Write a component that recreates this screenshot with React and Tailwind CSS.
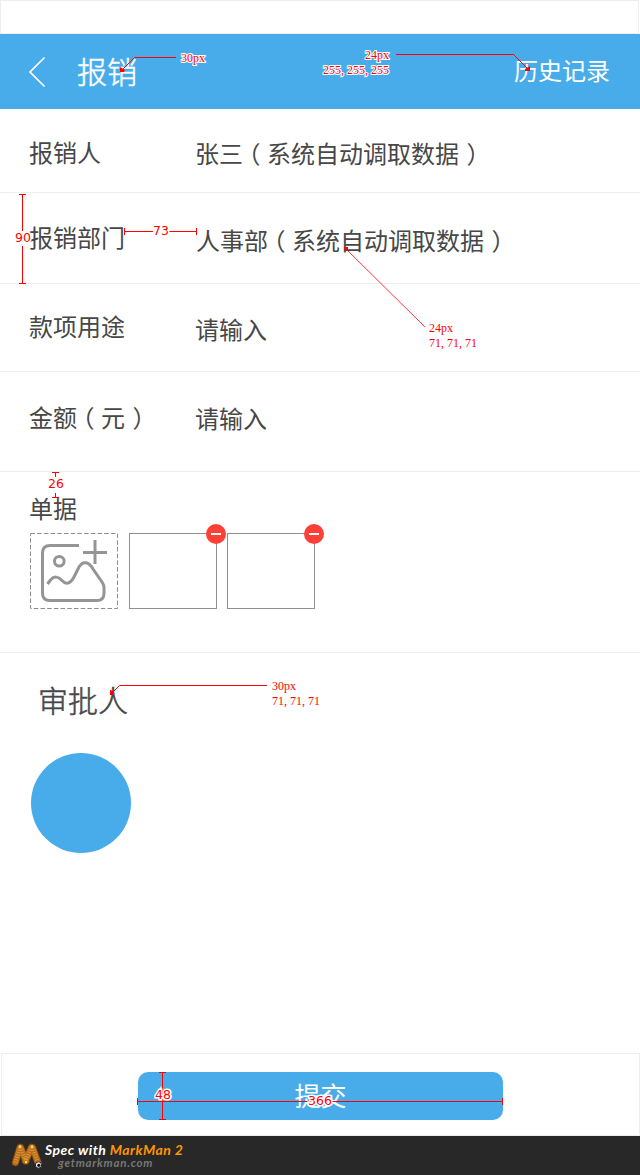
const CJK = 'font-["Noto_Sans_CJK_SC",sans-serif] font-normal';

function Text({ className, children }) {
  return <span className={`${className} whitespace-nowrap leading-none`}>{children}</span>;
}

function Paren({ children }) {
  return (
    <>
      <span className="mr-[6.5px] ml-[5.5px] [font-feature-settings:'halt']">（</span>
      {children}
      <span className="mr-[4.5px] ml-[7.5px] [font-feature-settings:'halt']">）</span>
    </>
  );
}

function Row({ label, value, className, valueClass }) {
  return (
    <div className={`${className} flex items-start border-b border-[#eeeeee] pl-[29px] text-2xl`}>
      <Text className="w-[166px]">{label}</Text>
      <Text className={valueClass}>{value}</Text>
    </div>
  );
}

function AddPhoto() {
  return (
    <svg className="h-[76px] w-[88px]" viewBox="0 0 88 76" fill="none" stroke="#959595">
      <rect x=".5" y=".5" width="87" height="75" stroke="#8c8c8c" strokeDasharray="4.5 2.2" />
      <g strokeWidth="3">
        <path d="M49 12.500H20Q12.500 12.500 12.500 20V60Q12.500 67.500 20 67.500H67Q74 67.500 74 60V54.500Q74 52 72 49L63 36C59 29 53 27 49 34L43.500 45Q38 54 32 47.500Q26 41 20.500 47L17.500 51" />
        <circle cx="29.300" cy="28.300" r="4.800" />
        <path d="M53 19.500H77M65 7V31" />
      </g>
    </svg>
  );
}

function Receipt() {
  return (
    <div className="relative h-[76px] w-[88px] border border-[#8f8f8f]">
      <button className="absolute -top-2.5 -right-2.5 flex size-5 items-center justify-center rounded-full bg-[#ff4037]">
        <span className="h-0.5 w-2.5 bg-white" />
      </button>
    </div>
  );
}

function Note({ x, y, children }) {
  const parts = children.split(",");
  return (
    <text x={x} y={y} fontFamily="Liberation Serif, serif" fontSize="12" fill="#f00" stroke="#fff" strokeWidth="2" paintOrder="stroke">
      {parts.map((p, i) => (
        <tspan key={i} dx={i ? 3 : 0}>{i < parts.length - 1 ? p + "," : p}</tspan>
      ))}
    </text>
  );
}

function Size({ x, y, children }) {
  return (
    <text x={x} y={y} textAnchor="middle" fontFamily="DejaVu Sans, sans-serif" fontSize="12.5" fill="#f00" stroke="#fff" strokeWidth="3" paintOrder="stroke">{children}</text>
  );
}

function Annotations() {
  return (
    <svg className="pointer-events-none absolute inset-0 h-[1136px] w-[640px]" viewBox="0 0 640 1136" fill="none" stroke="#f00">
      <path d="M176 57.500H134.500L122 70" />
      <path d="M396 54.500H513.500L528 69" />
      <path d="M346 249L425 327" strokeWidth="0.800" />
      <path d="M267 685.500H119.500L112 693" />
      <g fill="#f00" stroke="none">
        <path d="M120 67l5 3-1 2h-4z" />
        <path d="M530 66v5h-5v-2z" />
        <path d="M344 247h4v3l-3 1z" />
        <path d="M110 690l4 1v4h-4z" />
      </g>
      <path d="M19 194.500H26M19 283.500H26M22.500 194V283M124.500 228V235M196.500 228V235M124 231.500H197M52 472.500H59M55.500 472V497M52 497.500H59M159 1072.500H166M159 1119.500H166M162.500 1072V1120M137.500 1098V1105M502.500 1098V1105M137 1101.500H503" />
      <path d="M22.500 231V246M153 231.500H169M55.500 477V493" stroke="#fff" />
      <g stroke="none">
        <Note x={181} y={62}>30px</Note>
        <Note x={365} y={59}>24px</Note>
        <Note x={323} y={74}>255,255,255</Note>
        <Note x={429} y={332}>24px</Note>
        <Note x={429} y={347}>71,71,71</Note>
        <Note x={272} y={690}>30px</Note>
        <Note x={272} y={705}>71,71,71</Note>
        <Size x={23} y={242}>90</Size>
        <Size x={161} y={235}>73</Size>
        <Size x={56} y={488}>26</Size>
        <Size x={163} y={1099}>48</Size>
        <Size x={320} y={1105}>366</Size>
      </g>
    </svg>
  );
}

function Logo() {
  return (
    <svg className="h-[30px] w-[34px]" viewBox="0 0 34 30" fill="none" strokeLinecap="round">
      <g stroke="#7a3f0a" strokeWidth="7.500">
        <path d="M4.500 20.500L9 5.500M20.500 5.500L14.500 19M9.500 5.500L15 19M21.500 5.500L27.500 22" />
      </g>
      <g stroke="#b96f1a" strokeWidth="6">
        <path d="M4.500 20.500L9 5.500M20.500 5.500L14.500 19M9.500 5.500L15 19M21.500 5.500L27.500 22" />
      </g>
      <g stroke="#e0a145" strokeWidth="4" strokeDasharray="0.800 1.700" strokeLinecap="butt">
        <path d="M4.500 20.500L9 5.500M9.500 5.500L15 19M20.500 5.500L14.500 19M21.500 5.500L27.500 22" />
      </g>
      <circle cx="9" cy="4.500" r="1.200" fill="#ffe08a" />
      <circle cx="21" cy="4.500" r="1.200" fill="#ffe08a" />
      <circle cx="15" cy="20" r="1.200" fill="#ffe08a" />
      <circle cx="27.500" cy="23" r="3.200" fill="#eee" stroke="#222" />
      <circle cx="27.800" cy="23.300" r="1.600" fill="#111" />
    </svg>
  );
}

export default function App() {
  return (
    <div className={`${CJK} relative flex h-[1175px] w-[640px] flex-col overflow-hidden bg-white text-[#474747]`}>
      <div className="h-[34px] w-[639px] shrink-0 border border-[#eeeeee]" />
      <header className="flex h-[75px] shrink-0 items-start bg-[#49acea] text-white">
        <svg className="mt-[22px] ml-7 h-8 w-[18px]" viewBox="0 0 18 32" fill="none" stroke="#fff" strokeWidth="1.700">
          <path d="M16.500 1.500L2 16L16.500 30.500" />
        </svg>
        <Text className="mt-[21px] ml-[31px] text-[30px] font-light [-webkit-text-stroke:0.5px]">报销</Text>
        <Text className="mt-6 mr-[30px] ml-auto text-2xl">历史记录</Text>
      </header>
      <main className="flex flex-1 flex-col">
        <Row className="h-[84px] pt-[31px]" label="报销人" value={<>张三<Paren>系统自动调取数据</Paren></>} valueClass="mt-px" />
        <Row className="h-[91px] pt-8" label="报销部门" value={<>人事部<Paren>系统自动调取数据</Paren></>} valueClass="mt-[3px] ml-px" />
        <Row className="h-[88px] pt-[30px]" label="款项用途" value="请输入" valueClass="mt-[3px]" />
        <Row className="h-[100px] pt-[33px]" label={<>金额<Paren>元</Paren></>} value="请输入" valueClass="mt-px" />
        <section className="flex h-[181px] flex-col border-b border-[#eeeeee] pt-6">
          <Text className="ml-[29px] text-2xl">单据</Text>
          <div className="mt-[13px] ml-[30px] flex">
            <AddPhoto />
            <div className="ml-[11px] flex gap-2.5">
              <Receipt />
              <Receipt />
            </div>
          </div>
        </section>
        <section className="flex flex-col pt-[31px]">
          <Text className="ml-[38px] text-[30px] font-light [-webkit-text-stroke:0.5px]">审批人</Text>
          <div className="mt-[39px] ml-[31px] size-[100px] rounded-full bg-[#49acea]" />
        </section>
      </main>
      <div className="ml-px flex h-[83px] shrink-0 justify-center border border-[#eeeeee] pt-[18px]">
        <button className="h-12 w-[365px] rounded-[10px] bg-[#49acea] pb-0.5 text-[26px] leading-none text-white">提交</button>
      </div>
      <footer className='flex h-[39px] shrink-0 items-start bg-[#282828] pl-[11px] font-["Lato",sans-serif] font-bold italic'>
        <div className="pt-[6px]"><Logo /></div>
        <div className="flex flex-col pt-[7px]">
          <Text className="text-sm tracking-[0.45px] text-white">Spec with <span className="text-[#ff9500]">MarkMan 2</span></Text>
          <Text className="ml-[13px] text-[11.5px] tracking-[0.75px] text-[#777777]">getmarkman.com</Text>
        </div>
      </footer>
      <Annotations />
    </div>
  );
}
